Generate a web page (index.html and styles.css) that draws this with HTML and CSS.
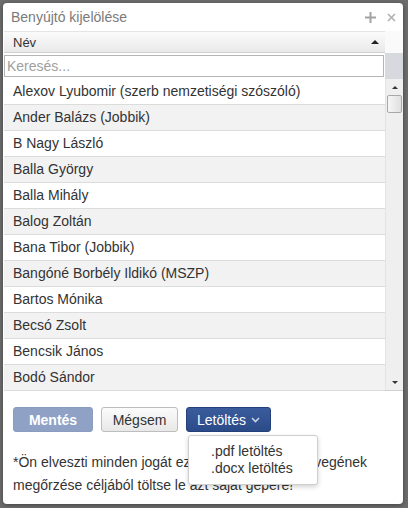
FILE: index.html
```html
<!DOCTYPE html>
<html lang="hu">
<head>
<meta charset="utf-8">
<title>Benyújtó kijelölése</title>
<link rel="stylesheet" href="styles.css">
</head>
<body>
<div class="dialog">
  <div class="titlebar">
    <span class="title">Benyújtó kijelölése</span>
    <span class="tools">
      <svg class="tool" width="11" height="11" viewBox="0 0 11 11"><path d="M5.5 0 V11 M0 5.5 H11" stroke="#a3a3a3" stroke-width="2"/></svg>
      <svg class="tool" width="9" height="9" viewBox="0 0 9 9"><path d="M1 1 L8 8 M8 1 L1 8" stroke="#b0b0b0" stroke-width="1.6"/></svg>
    </span>
  </div>
  <div class="grid">
    <div class="hrow">
      <div class="hcell">Név<span class="sort"></span></div>
      <div class="hpad"></div>
    </div>
    <div class="srow">
      <div class="scell"><input class="search" type="text" placeholder="Keresés..."></div>
      <div class="spad"></div>
    </div>
    <div class="body">
      <ul class="rows">
        <li>Alexov Lyubomir (szerb nemzetiségi szószóló)</li>
        <li>Ander Balázs (Jobbik)</li>
        <li>B Nagy László</li>
        <li>Balla György</li>
        <li>Balla Mihály</li>
        <li>Balog Zoltán</li>
        <li>Bana Tibor (Jobbik)</li>
        <li>Bangóné Borbély Ildikó (MSZP)</li>
        <li>Bartos Mónika</li>
        <li>Becsó Zsolt</li>
        <li>Bencsik János</li>
        <li>Bodó Sándor</li>
      </ul>
      <div class="scrollbar">
        <span class="arrow up"></span>
        <span class="thumb"></span>
        <span class="track"></span>
        <span class="arrow down"></span>
      </div>
    </div>
  </div>
  <div class="actions">
    <button class="btn save">Mentés</button>
    <button class="btn cancel">Mégsem</button>
    <div class="dd">
      <button class="btn download">Letöltés <svg class="chev" width="9" height="6" viewBox="0 0 9 6"><path d="M1 1 L4.5 4.5 L8 1" fill="none" stroke="#c8d2ea" stroke-width="1.6"/></svg></button>
      <div class="menu">
        <div class="item">.pdf letöltés</div>
        <div class="item">.docx letöltés</div>
      </div>
    </div>
  </div>
  <p class="note">*Ön elveszti minden jogát ezen előterjesztés szövegének megőrzése céljából töltse le azt saját gépére!</p>
</div>
</body>
</html>
```
FILE: styles.css
```css
* { box-sizing: border-box; }
html, body { margin: 0; }
body {
  width: 408px;
  height: 508px;
  background: #6c6c6c;
  padding: 3px 0 0 3px;
  font-family: "Liberation Sans", Arial, sans-serif;
  color: #333;
  overflow: hidden;
}
.dialog {
  width: 400px;
  height: 501px;
  background: #fff;
  border-radius: 4px;
  box-shadow: 0 1px 4px rgba(0,0,0,0.4);
  display: flex;
  flex-direction: column;
}
.titlebar {
  height: 28px;
  display: flex;
  align-items: center;
  justify-content: space-between;
  padding: 0 7px 0 8px;
}
.title { font-size: 14px; color: #7a7a7a; }
.tools { display: flex; gap: 11px; align-items: center; }
.tool { display: block; }
.grid { margin: 0 0 0 1px; width: 399px; }
.hrow { display: flex; height: 22px; }
.hcell {
  width: 381px;
  background: linear-gradient(#fbfbfb, #e9e9e9);
  border-top: 1px solid #e4e4e4;
  border-bottom: 1px solid #d0d0d0;
  font-size: 13px;
  padding: 3px 0 0 9px;
  position: relative;
}
.sort {
  position: absolute;
  right: 6px;
  top: 8px;
  border-left: 4px solid transparent;
  border-right: 4px solid transparent;
  border-bottom: 4px solid #222;
}
.hpad { flex: 1; background: #fafafa; }
.srow { display: flex; height: 26px; }
.scell { width: 381px; padding: 2px 0 2px 0; }
.search {
  width: 380px;
  height: 22px;
  border: 1px solid #b5b5b5;
  font-family: inherit;
  font-size: 14px;
  padding: 0 2px;
  margin: 0;
  outline: none;
}
.search::placeholder { color: #a0a0a0; }
.spad { flex: 1; background: #d6d9dd; }
.body { display: flex; height: 312px; border-bottom: 1px solid #d0d0d0; }
.rows { list-style: none; margin: 0; padding: 0; width: 381px; }
.rows li {
  height: 26px;
  border-bottom: 1px solid #dcdcdc;
  font-size: 14px;
  line-height: 25px;
  padding-left: 9px;
  white-space: nowrap;
}
.rows li:nth-child(even) { background: #f2f2f2; }
.scrollbar {
  flex: 1;
  background: #efefef;
  border-left: 1px solid #e3e3e3;
  display: flex;
  flex-direction: column;
  align-items: center;
}
.arrow { width: 0; height: 0; border-left: 3px solid transparent; border-right: 3px solid transparent; }
.arrow.up { border-bottom: 3px solid #333; margin-top: 7px; }
.arrow.down { border-top: 3px solid #333; margin-bottom: 6px; }
.thumb {
  width: 15px;
  height: 18px;
  margin-top: 6px;
  border: 1px solid #a8a8a8;
  border-radius: 2px;
  background: linear-gradient(90deg, #f6f6f6, #e0e0e0);
}
.track { flex: 1; }
.actions {
  display: flex;
  align-items: flex-start;
  padding: 16px 0 0 10px;
  gap: 8px;
}
.btn {
  height: 25px;
  font-family: inherit;
  font-size: 14px;
  border-radius: 3px;
  padding: 0;
  margin: 0;
}
.save {
  width: 80px;
  background: #8fa2c5;
  border: 1px solid #8a9dc0;
  color: #fff;
  font-weight: bold;
}
.cancel {
  width: 77px;
  background: linear-gradient(#fbfbfb, #e8e8e8);
  border: 1px solid #bdbdbd;
  color: #333;
}
.dd { position: relative; }
.download {
  width: 85px;
  background: linear-gradient(#3b5c9c, #2b4a88);
  border: 1px solid #23407a;
  color: #fff;
  display: flex;
  align-items: center;
  justify-content: center;
  gap: 5px;
}
.chev { margin-top: 1px; }
.menu {
  position: absolute;
  left: 2px;
  top: 28px;
  width: 130px;
  height: 50px;
  background: #fff;
  border: 1px solid #cfcfcf;
  border-radius: 3px;
  box-shadow: 0 2px 5px rgba(0,0,0,0.18);
  padding: 7px 0 0 22px;
  z-index: 2;
}
.item { font-size: 14px; line-height: 17px; color: #333; }
.note {
  margin: 19px 0 0 10px;
  width: 380px;
  font-size: 14px;
  line-height: 23px;
  color: #333;
}
```
